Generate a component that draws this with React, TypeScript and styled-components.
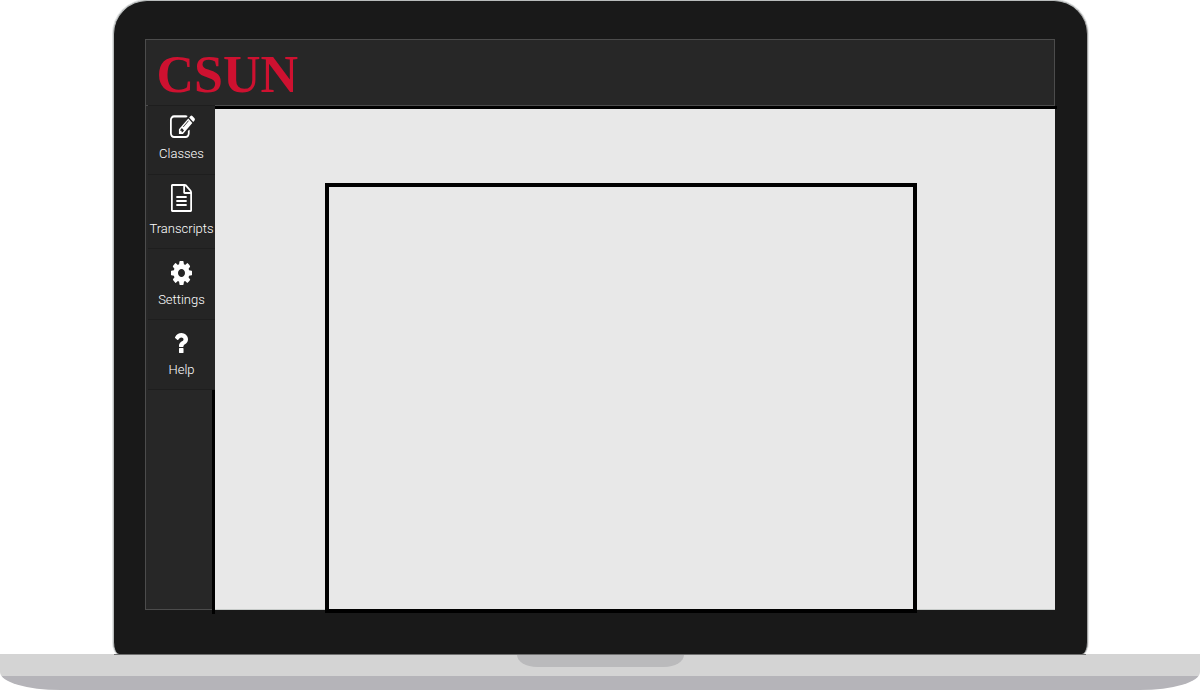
import React from "react";
import styled, { createGlobalStyle } from "styled-components";

const GlobalStyle = createGlobalStyle`
  *, *::before, *::after { box-sizing: border-box; }
  body {
    margin: 0;
    background: #ffffff;
    font-family: Roboto, "Liberation Sans", sans-serif;
  }
`;

const Laptop = styled.div`
  display: flex;
  flex-direction: column;
  align-items: center;
`;

const Lid = styled.div`
  display: flex;
  flex-direction: column;
  width: 81.25%;
  padding: 38px 32px 44px 31px;
  background: #191919;
  border: 1px solid #b9bcbc;
  border-color: #b9bcbc #a4a4a4 #6c6c6c #b9bcbc;
  border-bottom: 0;
  border-radius: 34px 34px 6px 6px / 34px 34px 12px 12px;
  box-shadow: 0 0 0 1px #e2e4e4;
`;

const Screen = styled.div`
  display: flex;
  flex-direction: column;
`;

const Header = styled.header`
  display: flex;
  align-items: center;
  height: 67px;
  padding: 4px 11px 0;
  background: #272727;
  border: 1px solid #4c4c4c;
`;

const Brand = styled.a`
  color: #ce1130;
  font-family: "Liberation Serif", serif;
  font-size: 52px;
  font-weight: 700;
  line-height: 56px;
  text-decoration: none;
`;

const Body = styled.div`
  display: flex;
`;

const Sidebar = styled.aside`
  display: flex;
  flex-direction: column;
  flex: 0 0 70px;
  background: #272727;
  border: solid #4c4c4c;
  border-width: 0 0 1px 1px;
`;

const NavList = styled.nav`
  display: flex;
  flex-direction: column;
  margin: -1px 0 0 2px;
  background: #252525;
`;

const NavItem = styled.button<{ $height: number; $top: number; $gap: number }>`
  display: flex;
  flex-direction: column;
  align-items: center;
  gap: ${({ $gap }) => $gap}px;
  height: ${({ $height }) => $height}px;
  padding: ${({ $top }) => $top}px 0 0 1px;
  background: transparent;
  border: 0;
  border-top: 1px solid #1e1e1e;
  color: #ffffff;
  font-family: inherit;
  font-size: 13px;
  font-weight: 300;
  line-height: 16px;
  white-space: nowrap;
  cursor: pointer;

  &:last-child { border-bottom: 1px solid #1e1e1e; }
`;

const Icon = styled.svg`
  display: block;
  flex: none;
  fill: currentColor;
`;

const SidebarRest = styled.div`
  flex: 1;
  margin-bottom: -5px;
  border-right: 3px solid #000000;
`;

const Main = styled.main`
  display: flex;
  flex: 1;
  flex-direction: column;
  min-width: 0;
  margin-right: -2px;
  border-top: 3px solid #000000;
`;

const Content = styled.div`
  margin-right: 2px;
  padding: 74px 138px 0 110px;
  background: #e8e8e8;
  border: solid #c6cac8;
  border-width: 0 0 1px;
`;

const Panel = styled.section`
  min-height: 430px;
  margin-bottom: -4px;
  border: 4px solid #000000;
`;

const Base = styled.div`
  display: flex;
  flex-direction: column;
  align-items: center;
  width: 100%;
  height: 36px;
  background: linear-gradient(#d4d4d4 22px, #b5b4b9 22px);
  border-radius: 0 0 60px 60px / 0 0 18px 18px;
`;

const Notch = styled.div`
  width: 167px;
  height: 13px;
  background: #bababc;
  border-top: 1px solid #707070;
  border-radius: 0 0 20px 20px / 0 0 12px 12px;
`;

const Hinge = styled.div`
  width: 81%;
  height: 1px;
  margin-bottom: -1px;
  background: #707070;
`;

const items = [
  {
    label: "Classes", height: 69, top: 9, gap: 8, width: 27, iconHeight: 23,
    viewBox: "-143 108 1935 1428",
    path: "M888 1184l116-116-152-152-116 116v56h96v96h56zm440-720q-16-16-33 1l-350 350q-17 17-1 33t33-1l350-350q17-17 1-33zm80 594v190q0 119-84.5 203.5t-203.5 84.5h-832q-119 0-203.5-84.5t-84.5-203.5v-832q0-119 84.5-203.5t203.5-84.5h832q63 0 117 25 15 7 18 23 3 17-9 29l-49 49q-14 14-32 8-23-6-45-6h-832q-66 0-113 47t-47 113v832q0 66 47 113t113 47h832q66 0 113-47t47-113v-126q0-13 9-22l64-64q15-15 35-7t20 29zm-96-738l288 288-672 672h-288v-288zm444 132l-92 92-288-288 92-92q28-28 68-28t68 28l152 152q28 28 28 68t-28 68z",
  },
  {
    label: "Transcripts", height: 74, top: 9, gap: 9, width: 21, iconHeight: 28,
    viewBox: "128 0 1536 1792",
    path: "M1596 380q28 28 48 76t20 88v1152q0 40-28 68t-68 28h-1344q-40 0-68-28t-28-68v-1600q0-40 28-68t68-28h896q40 0 88 20t76 48zm-444-244v376h376q-10-29-22-41l-313-313q-12-12-41-22zm384 1528v-1024h-416q-40 0-68-28t-28-68v-416h-768v1536h1280zm-1024-864q0-14 9-23t23-9h704q14 0 23 9t9 23v64q0 14-9 23t-23 9h-704q-14 0-23-9t-9-23v-64zm736 224q14 0 23 9t9 23v64q0 14-9 23t-23 9h-704q-14 0-23-9t-9-23v-64q0-14 9-23t23-9h704zm0 256q14 0 23 9t9 23v64q0 14-9 23t-23 9h-704q-14 0-23-9t-9-23v-64q0-14 9-23t23-9h704z",
  },
  {
    label: "Settings", height: 71, top: 12, gap: 7, width: 21, iconHeight: 24,
    viewBox: "128 128 1536 1536",
    path: "M1152 896q0-106-75-181t-181-75-181 75-75 181 75 181 181 75 181-75 75-181zm512-109v222q0 12-8 23t-20 13l-185 28q-19 54-39 91 35 50 107 138 10 12 10 25t-9 23q-27 37-99 108t-94 71q-12 0-26-9l-138-108q-44 23-91 38-16 136-29 186-7 28-36 28h-222q-14 0-24.5-8.5t-11.5-21.5l-28-184q-49-16-90-37l-141 107q-10 9-25 9-14 0-25-11-126-114-165-168-7-10-7-23 0-12 8-23 15-21 51-66.5t54-70.5q-27-50-41-99l-183-27q-13-2-21-12.5t-8-23.5v-222q0-12 8-23t19-13l186-28q14-46 39-92-40-57-107-138-10-12-10-24 0-10 9-23 26-36 98.5-107.5t94.5-71.5q13 0 26 10l138 107q44-23 91-38 16-136 29-186 7-28 36-28h222q14 0 24.5 8.5t11.5 21.5l28 184q49 16 90 37l142-107q9-9 24-9 13 0 25 10 129 119 165 170 7 8 7 22 0 12-8 23-15 21-51 66.5t-54 70.5q26 50 41 98l183 28q13 2 21 12.5t8 23.5z",
  },
  {
    label: "Help", height: 71, top: 13, gap: 9, width: 13, iconHeight: 20,
    viewBox: "486 256 918 1280",
    path: "M1088 1256v240q0 16-12 28t-28 12h-240q-16 0-28-12t-12-28v-240q0-16 12-28t28-12h240q16 0 28 12t12 28zm316-600q0 54-15.5 101t-35 76.5-55 59.5-57.5 43.5-61 35.5q-41 23-68.5 65t-27.5 67q0 17-12 32.5t-28 15.5h-240q-15 0-25.5-18.5t-10.5-37.5v-45q0-83 65-156.5t143-108.5q59-27 84-56t25-76q0-42-46.5-74t-107.5-32q-65 0-108 29-35 25-107 115-13 16-31 16-12 0-25-8l-164-125q-13-10-15.5-25t5.5-28q160-266 464-266 80 0 161 31t146 83 106 127.5 41 158.5z",
  },
];

export default function App() {
  return (
    <>
      <GlobalStyle />
      <Laptop>
        <Lid>
          <Screen>
            <Header>
              <Brand href="#">CSUN</Brand>
            </Header>
            <Body>
              <Sidebar>
                <NavList>
                  {items.map((item) => (
                    <NavItem key={item.label} type="button" $height={item.height} $top={item.top} $gap={item.gap}>
                      <Icon
                        width={item.width}
                        height={item.iconHeight}
                        viewBox={item.viewBox}
                        preserveAspectRatio="none"
                        aria-hidden="true"
                      >
                        <path d={item.path} />
                      </Icon>
                      <span>{item.label}</span>
                    </NavItem>
                  ))}
                </NavList>
                <SidebarRest />
              </Sidebar>
              <Main>
                <Content>
                  <Panel />
                </Content>
              </Main>
            </Body>
          </Screen>
        </Lid>
        <Base>
          <Hinge />
          <Notch />
        </Base>
      </Laptop>
    </>
  );
}
